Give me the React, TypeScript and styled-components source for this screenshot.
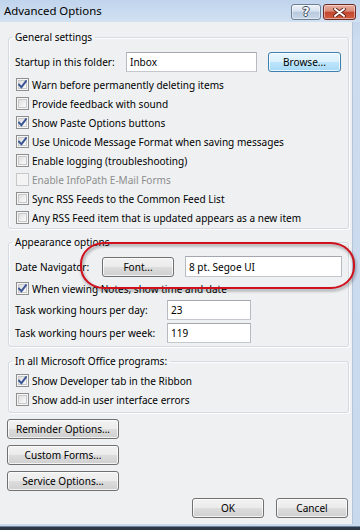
import React from "react";
import styled, { createGlobalStyle } from "styled-components";

const FONT = `"Noto Sans", "Liberation Sans", sans-serif`;
const FS = "10.05px";

const GlobalStyle = createGlobalStyle`
  html, body { margin: 0; padding: 0; }
  body { font-family: ${FONT}; }
  * { box-sizing: border-box; }
`;

const Screen = styled.div`
  width: 360px;
  height: 530px;
  overflow: hidden;
  display: flex;
  flex-direction: column;
  background: linear-gradient(#3a4a5e 0, #1b2430 1px, #2d3644 100%);
  font-family: ${FONT};
  font-size: ${FS};
  color: #000;
`;

const Window = styled.div`
  height: 527px;
  flex-shrink: 0;
  display: flex;
  flex-direction: column;
  background: linear-gradient(to bottom, #bcd0ea, #cddcef 40px, #c9d9ed);
  border-bottom: 1px solid #6e829c;
`;

const TitleBar = styled.div`
  height: 22px;
  flex-shrink: 0;
  display: flex;
  align-items: center;
  padding: 0 4px 0 4px;
  background: linear-gradient(to bottom, #c0d4ec, #cbdcf0 60%, #d2e1f2);
`;

const Title = styled.span`
  font-size: 11.4px;
  line-height: 14px;
  color: #000;
`;

const CaptionGroup = styled.div`
  margin-left: auto;
  align-self: flex-start;
  margin-top: 4px;
  display: flex;
  gap: 2px;
`;

const CaptionButton = styled.div<{ $close?: boolean }>`
  width: ${(p) => (p.$close ? 33 : 30)}px;
  height: 16px;
  border-radius: 3px;
  display: flex;
  align-items: center;
  justify-content: center;
  border: 1px solid ${(p) => (p.$close ? "#6b2a22" : "#6e7e94")};
  background: ${(p) =>
    p.$close
      ? "linear-gradient(to bottom, #e9ada0 0%, #d88a78 45%, #c4452c 50%, #cf5d43 100%)"
      : "linear-gradient(to bottom, #eef3f9 0%, #d6e1ee 45%, #b8c9de 50%, #c9d7e8 100%)"};
  box-shadow: inset 0 0 0 1px rgba(255, 255, 255, 0.45);
`;

const HelpGlyph = styled.span`
  font-family: "DejaVu Sans", sans-serif;
  font-weight: bold;
  font-size: 12px;
  line-height: 12px;
  color: #fff;
  text-shadow: -1px 0 #3d4a5c, 1px 0 #3d4a5c, 0 -1px #3d4a5c, 0 1px #3d4a5c;
`;

const FrameBody = styled.div`
  flex: 1;
  display: flex;
  padding: 0 7px 2px 0;
  min-height: 0;
`;

const Client = styled.div`
  flex: 1;
  position: relative;
  display: flex;
  flex-direction: column;
  padding: 8px 3px 0 7px;
  background: #eef0f2;
  border-right: 1px solid #b5c4d6;
`;

const Group = styled.fieldset<{ $mt: number }>`
  margin: ${(p) => p.$mt}px 0 0 1px;
  padding: 0;
  min-width: 0;
  border: 1px solid #d5dbe1;
  border-radius: 3px;
  box-shadow: inset 1px 1px 0 #fbfcfd, 1px 1px 0 #fbfcfd;
`;

const Legend = styled.legend`
  margin-left: 3px;
  padding: 0 3px;
  line-height: 14px;
  font-size: ${FS};
`;

const GroupBody = styled.div<{ $pt: number; $pb: number }>`
  display: flex;
  flex-direction: column;
  padding: ${(p) => p.$pt}px 0 ${(p) => p.$pb}px 6px;
`;

const FieldRow = styled.div<{ $mt?: number; $h?: number }>`
  display: flex;
  align-items: center;
  height: ${(p) => p.$h ?? 20}px;
  margin-top: ${(p) => p.$mt ?? 0}px;
`;

const Label = styled.span<{ $w: number }>`
  width: ${(p) => p.$w}px;
  flex-shrink: 0;
  white-space: nowrap;
`;

const TextBox = styled.div<{ $w: number; $h?: number; $ml?: number }>`
  width: ${(p) => p.$w}px;
  height: ${(p) => p.$h ?? 20}px;
  margin-left: ${(p) => p.$ml ?? 0}px;
  flex-shrink: 0;
  display: flex;
  align-items: center;
  padding-left: 3px;
  background: #fff;
  border: 1px solid #abadb3;
  border-color: #a4a7ad #b7bbc1 #c4c8ce #b7bbc1;
  white-space: nowrap;
`;

const Button = styled.button<{ $w: number; $ml?: number; $focus?: boolean }>`
  width: ${(p) => p.$w}px;
  height: 20px;
  margin: 0 0 0 ${(p) => p.$ml ?? 0}px;
  padding: 0;
  flex-shrink: 0;
  font-family: ${FONT};
  font-size: ${FS};
  color: #000;
  border-radius: 3px;
  border: 1px solid ${(p) => (p.$focus ? "#3c7fb1" : "#707070")};
  background: ${(p) =>
    p.$focus
      ? "linear-gradient(to bottom, #eaf6fd 0%, #d9f0fc 50%, #bee6fd 50%, #a7d9f5 100%)"
      : "linear-gradient(to bottom, #f2f2f2 0%, #ebebeb 50%, #dddddd 50%, #cfcfcf 100%)"};
  box-shadow: inset 0 0 0 1px rgba(255, 255, 255, 0.75);
  white-space: nowrap;
`;

const CheckList = styled.div<{ $mt?: number }>`
  display: flex;
  flex-direction: column;
  margin-top: ${(p) => p.$mt ?? 0}px;
`;

const CheckRow = styled.div<{ $disabled?: boolean }>`
  height: 19px;
  display: flex;
  align-items: center;
  gap: 3px;
  padding-left: 1px;
  white-space: nowrap;
  color: ${(p) => (p.$disabled ? "#8d8d8d" : "#000")};
`;

const Box = styled.span<{ $disabled?: boolean }>`
  width: 13px;
  height: 13px;
  flex-shrink: 0;
  display: flex;
  align-items: center;
  justify-content: center;
  border: 1px solid ${(p) => (p.$disabled ? "#c8c8c8" : "#8f8f8f")};
  background: ${(p) =>
    p.$disabled ? "#f4f4f4" : "linear-gradient(135deg, #d4d4d4 0%, #f2f2f2 60%, #ffffff 100%)"};
  box-shadow: ${(p) =>
    p.$disabled ? "none" : "inset 0 0 0 1px #f6f6f6, inset 0 0 0 2px #c9c9c9"};
`;

const ButtonColumn = styled.div`
  display: flex;
  flex-direction: column;
  gap: 6px;
  margin: 6px 0 0 0;
`;

const Footer = styled.div`
  display: flex;
  justify-content: flex-end;
  margin-top: 7px;
  padding-right: 1px;
`;

const Annotation = styled.div`
  position: absolute;
  left: 80px;
  top: 220px;
  width: 275px;
  height: 47px;
  border: 2px solid #d0101c;
  border-radius: 24px / 22px;
  pointer-events: none;
  filter: drop-shadow(1px 2px 1.5px rgba(0, 0, 0, 0.4));
`;

const Check = ({ checked, disabled, children }: { checked?: boolean; disabled?: boolean; children: React.ReactNode }) => (
  <CheckRow $disabled={disabled}>
    <Box $disabled={disabled}>
      {checked && (
        <svg width="9" height="9" viewBox="0 0 9 9">
          <path d="M1 4.6 L3.4 7.2 L8 1.2" fill="none" stroke="#3a5696" strokeWidth="2" strokeLinecap="square" />
        </svg>
      )}
    </Box>
    <span>{children}</span>
  </CheckRow>
);

export default function App() {
  return (
    <>
      <GlobalStyle />
      <Screen>
        <Window>
          <TitleBar>
            <Title>Advanced Options</Title>
            <CaptionGroup>
              <CaptionButton>
                <HelpGlyph>?</HelpGlyph>
              </CaptionButton>
              <CaptionButton $close>
                <svg width="13" height="9" viewBox="0 0 13 9">
                  <path d="M2 1 L11 8 M11 1 L2 8" stroke="#5a1d15" strokeWidth="3.6" strokeLinecap="round" />
                  <path d="M2 1 L11 8 M11 1 L2 8" stroke="#ffffff" strokeWidth="2" strokeLinecap="round" />
                </svg>
              </CaptionButton>
            </CaptionGroup>
          </TitleBar>
          <FrameBody>
            <Client>
              <Group $mt={0}>
                <Legend>General settings</Legend>
                <GroupBody $pt={7} $pb={1}>
                  <FieldRow $h={21}>
                    <Label $w={111}>Startup in this folder:</Label>
                    <TextBox $w={131}>Inbox</TextBox>
                    <Button $w={73} $ml={11} $focus>
                      Browse...
                    </Button>
                  </FieldRow>
                  <CheckList $mt={3}>
                    <Check checked>Warn before permanently deleting items</Check>
                    <Check>Provide feedback with sound</Check>
                    <Check checked>Show Paste Options buttons</Check>
                    <Check checked>Use Unicode Message Format when saving messages</Check>
                    <Check>Enable logging (troubleshooting)</Check>
                    <Check disabled>Enable InfoPath E-Mail Forms</Check>
                    <Check>Sync RSS Feeds to the Common Feed List</Check>
                    <Check>Any RSS Feed item that is updated appears as a new item</Check>
                  </CheckList>
                </GroupBody>
              </Group>

              <Group $mt={6}>
                <Legend>Appearance options</Legend>
                <GroupBody $pt={7} $pb={3}>
                  <FieldRow $h={21}>
                    <Label $w={87}>Date Navigator:</Label>
                    <Button $w={72}>Font...</Button>
                    <TextBox $w={157} $h={21} $ml={11}>
                      8 pt. Segoe UI
                    </TextBox>
                  </FieldRow>
                  <CheckList $mt={2}>
                    <Check checked>When viewing Notes, show time and date</Check>
                  </CheckList>
                  <FieldRow $mt={2}>
                    <Label $w={152}>Task working hours per day:</Label>
                    <TextBox $w={84}>23</TextBox>
                  </FieldRow>
                  <FieldRow $mt={3}>
                    <Label $w={152}>Task working hours per week:</Label>
                    <TextBox $w={84}>119</TextBox>
                  </FieldRow>
                </GroupBody>
              </Group>

              <Group $mt={7}>
                <Legend>In all Microsoft Office programs:</Legend>
                <GroupBody $pt={3} $pb={3}>
                  <CheckList>
                    <Check checked>Show Developer tab in the Ribbon</Check>
                    <Check>Show add-in user interface errors</Check>
                  </CheckList>
                </GroupBody>
              </Group>

              <ButtonColumn>
                <Button $w={112}>Reminder Options...</Button>
                <Button $w={112}>Custom Forms...</Button>
                <Button $w={112}>Service Options...</Button>
              </ButtonColumn>

              <Footer>
                <Button $w={72}>OK</Button>
                <Button $w={72} $ml={12}>
                  Cancel
                </Button>
              </Footer>

              <Annotation />
            </Client>
          </FrameBody>
        </Window>
      </Screen>
    </>
  );
}
